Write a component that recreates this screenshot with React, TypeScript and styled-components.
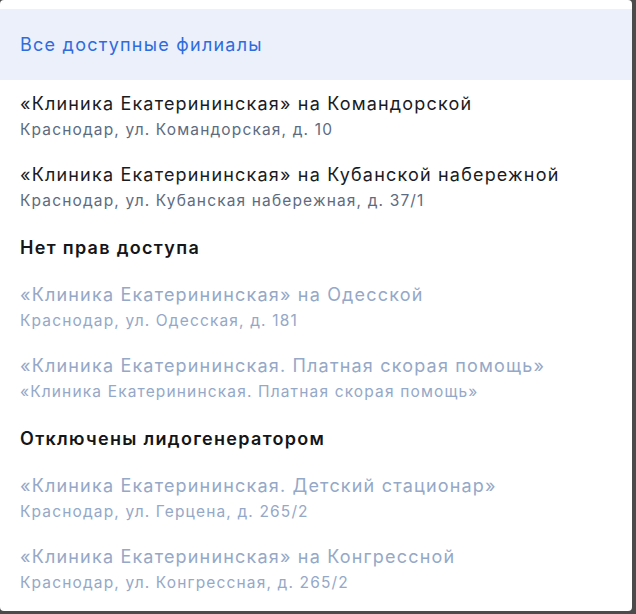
import React from "react";
import styled, { createGlobalStyle } from "styled-components";

const Global = createGlobalStyle`
  html, body { margin: 0; padding: 0; background: #4b4b4b; }
  body { font-family: Inter, "Noto Sans", sans-serif; }
`;

const Panel = styled.div`
  width: 632px;
  height: 611px;
  box-sizing: border-box;
  background: #ffffff;
  border-radius: 4px;
  padding-top: 9px;
  display: flex;
  flex-direction: column;
  overflow: hidden;
`;

const AllRow = styled.div`
  height: 71px;
  box-sizing: border-box;
  padding: 0 20px;
  display: flex;
  align-items: center;
  background: #ebf0fa;
  color: #2d6cdf;
  font-size: 18px;
  letter-spacing: 1.25px;
  line-height: 24px;
`;

const Item = styled.div`
  padding: 12px 20px 11px;
  display: flex;
  flex-direction: column;
  gap: 2px;
`;

const Title = styled.div<{ $disabled?: boolean }>`
  font-size: 18px;
  letter-spacing: 1.18px;
  line-height: 24px;
  white-space: nowrap;
  color: ${(p) => (p.$disabled ? "#95a8c7" : "#1a1b1f")};
`;

const Sub = styled.div<{ $disabled?: boolean }>`
  font-size: 15.5px;
  letter-spacing: 1.15px;
  line-height: 22px;
  padding-top: 1px;
  margin-bottom: -1px;
  white-space: nowrap;
  color: ${(p) => (p.$disabled ? "#95a8c7" : "#5d6b80")};
`;

const Heading = styled.div`
  padding: 14px 20px 11px;
  font-size: 18px;
  line-height: 24px;
  font-weight: 600;
  letter-spacing: 1.3px;
  color: #141518;
`;

type Branch = { title: string; sub: string };

const active: Branch[] = [
  { title: "«Клиника Екатерининская» на Командорской", sub: "Краснодар, ул. Командорская, д. 10" },
  { title: "«Клиника Екатерининская» на Кубанской набережной", sub: "Краснодар, ул. Кубанская набережная, д. 37/1" },
];

const noAccess: Branch[] = [
  { title: "«Клиника Екатерининская» на Одесской", sub: "Краснодар, ул. Одесская, д. 181" },
  { title: "«Клиника Екатерининская. Платная скорая помощь»", sub: "«Клиника Екатерининская. Платная скорая помощь»" },
];

const disabledLead: Branch[] = [
  { title: "«Клиника Екатерининская. Детский стационар»", sub: "Краснодар, ул. Герцена, д. 265/2" },
  { title: "«Клиника Екатерининская» на Конгрессной", sub: "Краснодар, ул. Конгрессная, д. 265/2" },
];

const BranchItem = ({ b, disabled }: { b: Branch; disabled?: boolean }) => (
  <Item>
    <Title $disabled={disabled}>{b.title}</Title>
    <Sub $disabled={disabled}>{b.sub}</Sub>
  </Item>
);

export default function App() {
  return (
    <>
      <Global />
      <Panel>
        <AllRow>Все доступные филиалы</AllRow>
        {active.map((b) => (
          <BranchItem key={b.title} b={b} />
        ))}
        <Heading>Нет прав доступа</Heading>
        {noAccess.map((b) => (
          <BranchItem key={b.title} b={b} disabled />
        ))}
        <Heading>Отключены лидогенератором</Heading>
        {disabledLead.map((b) => (
          <BranchItem key={b.title} b={b} disabled />
        ))}
      </Panel>
    </>
  );
}
